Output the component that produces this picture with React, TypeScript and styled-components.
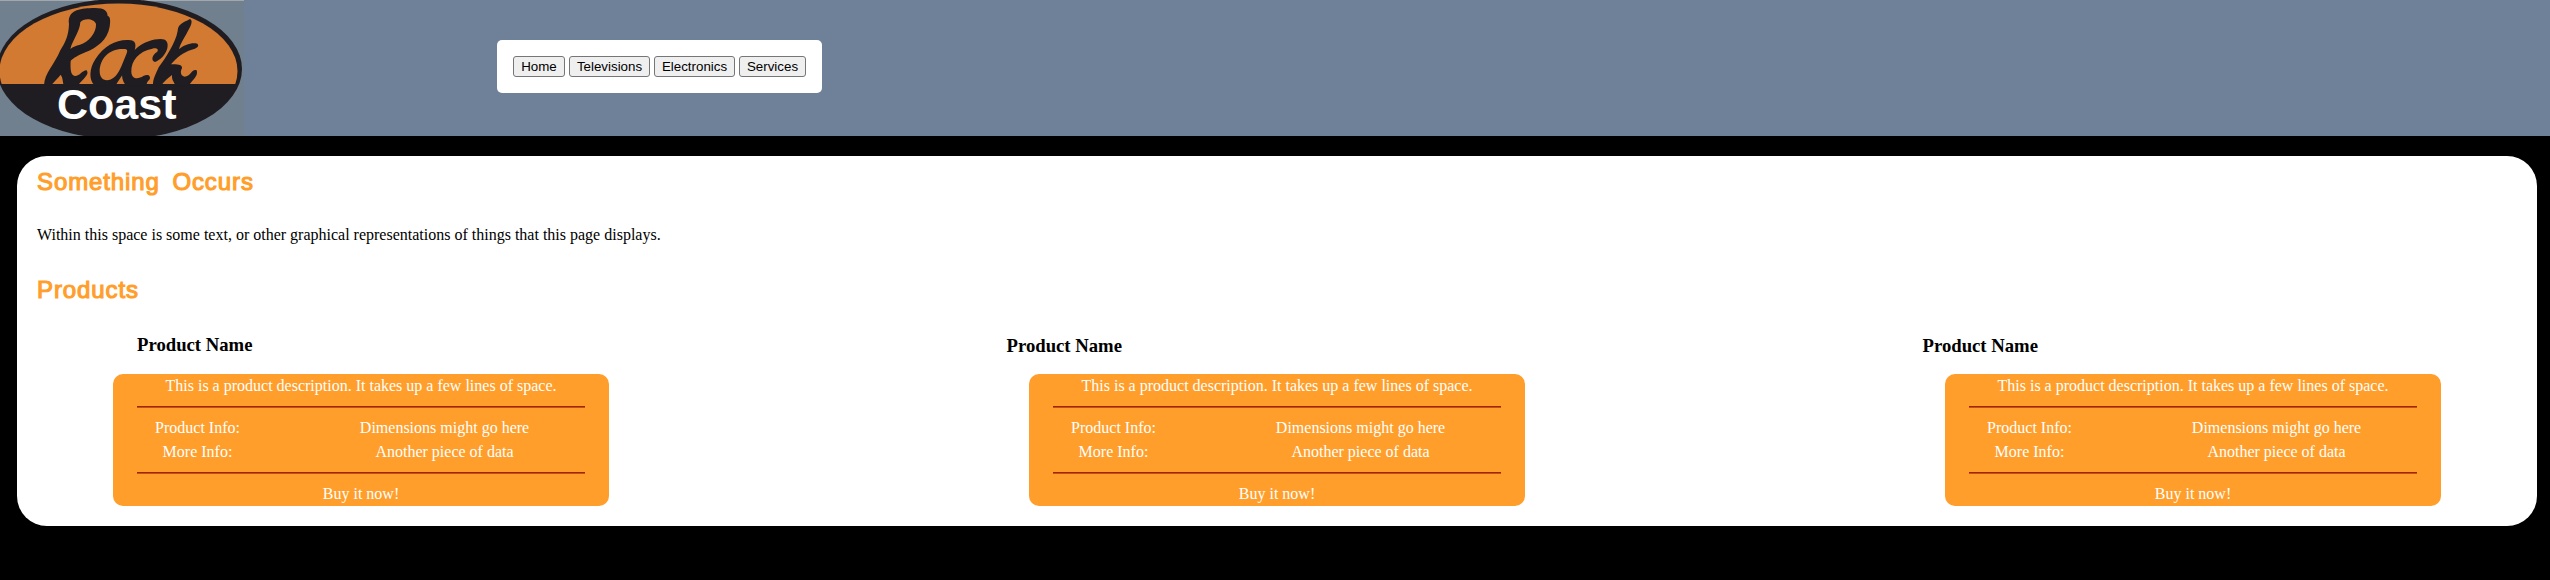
import React from "react";
import styled, { createGlobalStyle } from "styled-components";

const GlobalStyle = createGlobalStyle`
  body {
    margin: 0;
    background: #000;
    color: #000;
    font: 16px/24px "Liberation Serif", "Times New Roman", serif;
  }
`;

const Header = styled.header`
  display: flex;
  height: 136px;
  background: #6e8199;
`;

const LogoImage = styled.svg`
  display: block;
  width: 244px;
  height: 136px;
`;

const Nav = styled.nav`
  display: flex;
  align-items: center;
  gap: 4px;
  box-sizing: border-box;
  width: 325px;
  height: 53px;
  margin: 40px 0 0 253px;
  padding: 0 16px;
  background: #fff;
  border-radius: 5px;
`;

const NavButton = styled.button<{ $width: number }>`
  box-sizing: border-box;
  width: ${({ $width }) => $width}px;
  height: 21px;
  padding: 0;
  border: 1px solid #767676;
  border-radius: 3px;
  background: #efefef;
  color: #000;
  font: 13.333px/15px "Liberation Sans", Arial, sans-serif;
  white-space: nowrap;
`;

const Main = styled.main`
  box-sizing: border-box;
  height: 370px;
  margin: 20px 13px 0 17px;
  padding: 8px 0 0 20px;
  background: #fff;
  border-radius: 30px;
`;

const SectionTitle = styled.h2<{ $wordGap?: number }>`
  margin: 0;
  color: #ff9e2a;
  font: 400 24px/36px "Liberation Sans", Arial, sans-serif;
  letter-spacing: 0.9px;
  word-spacing: ${({ $wordGap = 0 }) => $wordGap}px;
  -webkit-text-stroke: 1.1px #ff9e2a;
`;

const Intro = styled.p`
  margin: 23px 0 25px;
  line-height: 24px;
`;

const ProductRow = styled.div`
  display: flex;
  gap: 420px;
  margin: 24px 0 0 76px;
`;

const Product = styled.article`
  width: 496px;
`;

const ProductName = styled.h3<{ $first: boolean }>`
  box-sizing: border-box;
  height: 28px;
  margin: 0 0 14px ${({ $first }) => ($first ? 24 : -22.5)}px;
  padding-top: ${({ $first }) => ($first ? 0 : 1)}px;
  font: 700 18.72px/25px "Liberation Serif", "Times New Roman", serif;
`;

const Card = styled.div`
  box-sizing: border-box;
  height: 132px;
  padding: 0 24px;
  border-radius: 10px;
  background: #ff9e2a;
  color: #fff;
  text-align: center;
`;

const Rule = styled.hr`
  height: 0;
  margin: 8px 0;
  border: 0;
  border-top: 1px solid #8b2f0a;
  border-bottom: 1px solid #d9480a;
`;

const Details = styled.div`
  display: grid;
  grid-template-columns: 121px 1fr;
  column-gap: 46px;
`;

const Detail = styled.div``;

function Logo() {
  return (
    <LogoImage viewBox="0 0 244 136" role="img" aria-label="Rock Coast">
      <clipPath id="top"><rect width="244" height="84" /></clipPath>
      <rect width="244" height="136" fill="#70808f" />
      <rect width="244" height="1" fill="#a3a6aa" />
      <ellipse cx="119.5" cy="69" rx="122.5" ry="70" fill="#1f1d22" />
      <ellipse cx="118.5" cy="71" rx="119" ry="67.5" fill="#d27932" clipPath="url(#top)" />
      <g fill="#1f1d22" fillRule="evenodd" transform="translate(36 0) scale(.3333)">
        <path d="M24 256C26 218 55 195 73 151C88 127 98 106 99 72C94 30 130 26 168 24C206 22 214 32 215 48C223 49 224 62 221 80C214 120 184 142 148 157C130 165 111 174 104 183C103 204 103 225 116 228C132 229 139 210 152 211C162 225 140 236 126 257H84C79 246 82 235 74 224C65 236 55 244 45 256ZM133 67C142 54 174 54 180 72C182 98 157 127 132 134C120 137 111 140 103 147C111 117 131 96 133 67Z" />
        <path d="M175 256C158 239 160 205 178 178C204 137 241 118 278 120C299 121 302 131 295 155C284 195 259 222 239 256ZM191 213C192 176 220 145 263 147C275 147 276 151 270 165C257 195 246 239 213 241C198 240 191 229 191 213Z" />
        <path d="M271 256C259 246 254 223 262 200C283 151 324 118 374 117C391 117 398 127 394 145C390 164 371 182 357 186C344 181 348 165 364 155C369 147 361 143 349 146C309 153 285 182 286 215C287 239 307 238 322 228C330 225 339 222 342 232C343 242 329 245 333 256Z" />
        <path d="M351 256C350 236 362 218 368 202C391 171 419 127 425 93C426 72 439 69 462 57C471 61 466 75 459 87C449 108 434 128 429 148C443 135 467 127 484 131C492 138 481 146 467 149C442 156 421 174 405 193C422 192 440 193 438 205C431 218 436 229 446 230C465 230 467 205 482 211C489 228 466 243 460 256H418C414 245 407 241 408 225C397 233 384 244 376 256Z" />
      </g>
      <text x="57" y="118.5" textLength="119.5" lengthAdjust="spacingAndGlyphs" fill="#fff" fontFamily="Liberation Sans, Arial, sans-serif" fontSize="43" fontWeight="700">Coast</text>
    </LogoImage>
  );
}

const links = [
  { label: "Home", width: 52 },
  { label: "Televisions", width: 81 },
  { label: "Electronics", width: 81 },
  { label: "Services", width: 67 },
];

export default function App() {
  return (
    <>
      <GlobalStyle />
      <Header>
        <Logo />
        <Nav>
          {links.map((link) => (
            <NavButton key={link.label} $width={link.width}>{link.label}</NavButton>
          ))}
        </Nav>
      </Header>
      <Main>
        <SectionTitle $wordGap={5}>Something Occurs</SectionTitle>
        <Intro>Within this space is some text, or other graphical representations of things that this page displays.</Intro>
        <SectionTitle>Products</SectionTitle>
        <ProductRow>
          {[0, 1, 2].map((index) => (
            <Product key={index}>
              <ProductName $first={index === 0}>Product Name</ProductName>
              <Card>
                <Detail>This is a product description. It takes up a few lines of space.</Detail>
                <Rule />
                <Details>
                  <Detail>Product Info:</Detail>
                  <Detail>Dimensions might go here</Detail>
                  <Detail>More Info:</Detail>
                  <Detail>Another piece of data</Detail>
                </Details>
                <Rule />
                <Detail>Buy it now!</Detail>
              </Card>
            </Product>
          ))}
        </ProductRow>
      </Main>
    </>
  );
}
